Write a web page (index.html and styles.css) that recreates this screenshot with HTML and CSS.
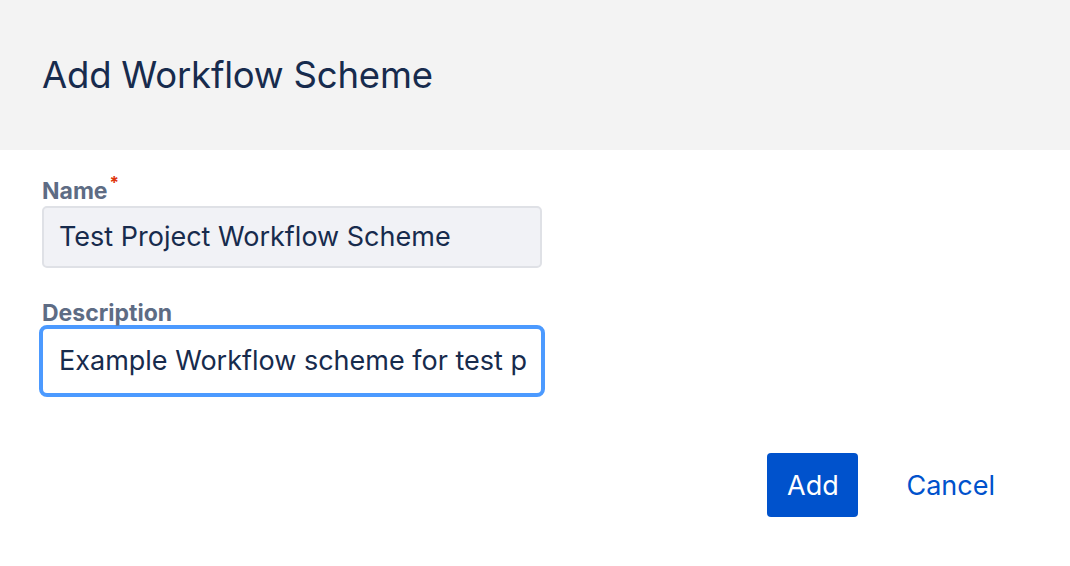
FILE: index.html
```html
<!DOCTYPE html>
<html>
<head>
<meta charset="utf-8">
<link rel="stylesheet" href="styles.css">
</head>
<body>
<div class="dialog">
  <header class="dialog-header">
    <h1 class="dialog-title">Add Workflow Scheme</h1>
  </header>
  <form class="dialog-form">
    <div class="field field-name">
      <label class="field-label">Name<span class="required">*</span></label>
      <div class="text-input">Test Project Workflow Scheme</div>
    </div>
    <div class="field field-desc">
      <label class="field-label">Description</label>
      <div class="text-input text-input-focused">Example Workflow scheme for test p</div>
    </div>
    <div class="actions">
      <button type="button" class="btn-primary">Add</button>
      <button type="button" class="btn-link">Cancel</button>
    </div>
  </form>
</div>
</body>
</html>
```

FILE: styles.css
```css
html, body {
  margin: 0;
  padding: 0;
  background: #ffffff;
}
body {
  font-family: Inter, "Liberation Sans", sans-serif;
  color: #172b4d;
}
.dialog {
  width: 1070px;
  height: 566px;
}
.dialog-header {
  height: 150px;
  background: #f3f3f3;
  display: flex;
  align-items: center;
  padding: 0 42px;
  box-sizing: border-box;
}
.dialog-title {
  margin: 0;
  font-weight: 400;
  font-size: 36.5px;
  line-height: 44px;
  color: #172b4d;
  letter-spacing: -0.2px;
}
.dialog-form {
  padding: 28px 42px 0 42px;
}
.field {
  display: flex;
  flex-direction: column;
  width: 500px;
}
.field-label {
  font-size: 23px;
  line-height: 26px;
  font-weight: 700;
  color: #5e6c84;
  margin-bottom: 2px;
  position: relative;
}
.required {
  color: #de350b;
  font-size: 17px;
  position: absolute;
  top: -8px;
  margin-left: 2px;
}
.text-input {
  box-sizing: border-box;
  height: 62px;
  border: 2px solid #dfe1e6;
  border-radius: 5px;
  background: #f1f2f6;
  font-size: 27px;
  line-height: 58px;
  padding: 0 15px;
  color: #172b4d;
  white-space: nowrap;
  overflow: hidden;
}
.field-desc {
  margin-top: 32px;
}
.field-desc .field-label {
  margin-bottom: -1px;
}
.text-input-focused {
  width: 506px;
  height: 72px;
  margin-left: -3px;
  border: 4px solid #4c9aff;
  border-radius: 8px;
  background: #ffffff;
  line-height: 64px;
  padding: 0 16px;
}
.actions {
  display: flex;
  justify-content: flex-end;
  align-items: center;
  gap: 22px;
  width: 979px;
  margin-top: 56px;
}
.btn-primary {
  height: 64px;
  width: 91px;
  border: none;
  border-radius: 4px;
  background: #0052cc;
  color: #ffffff;
  font-family: inherit;
  font-size: 27px;
  padding: 0;
}
.btn-link {
  height: 64px;
  border: none;
  background: transparent;
  color: #0052cc;
  font-family: inherit;
  font-size: 27px;
  padding: 0 26px;
}
```
